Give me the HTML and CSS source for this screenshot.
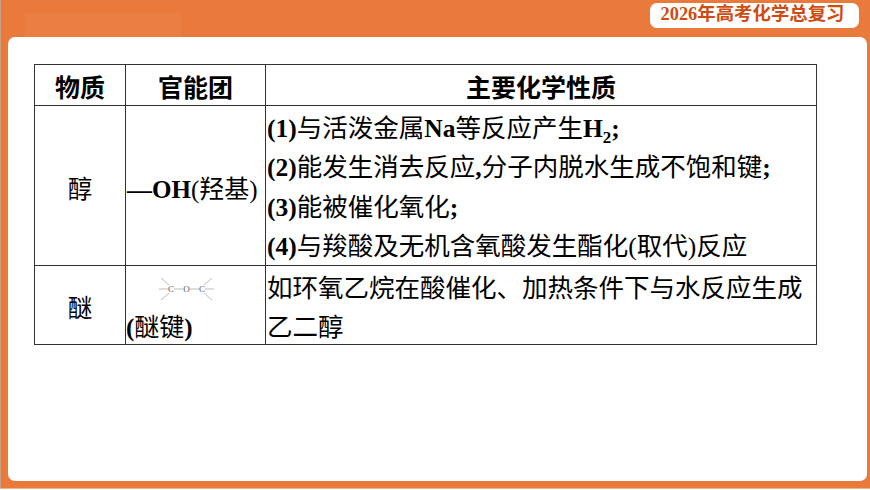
FILE: index.html
```html
<!DOCTYPE html>
<html lang="zh-CN">
<head>
<meta charset="utf-8">
<title>2026年高考化学总复习</title>
<link rel="stylesheet" href="styles.css">
</head>
<body>
<div class="slide">
  <header class="top">
    <div class="glow"></div>
    <div class="badge">2026年高考化学总复习</div>
  </header>
  <main class="panel">
    <table class="chem">
      <colgroup><col class="c1"><col class="c2"><col class="c3"></colgroup>
      <thead>
        <tr class="head"><th>物质</th><th>官能团</th><th>主要化学性质</th></tr>
      </thead>
      <tbody>
        <tr class="r1">
          <td class="mid">醇</td>
          <td class="mid fg"><b>—OH</b>(羟基)</td>
          <td class="props">
            <div class="props-text">
              <div><b>(1)</b>与活泼金属<b>Na</b>等反应产生<b>H<sub>2</sub></b><b>;</b></div>
              <div><b>(2)</b>能发生消去反应<b>,</b>分子内脱水生成不饱和键<b>;</b></div>
              <div><b>(3)</b>能被催化氧化<b>;</b></div>
              <div><b>(4)</b>与羧酸及无机含氧酸发生酯化(取代)反应</div>
            </div>
          </td>
        </tr>
        <tr class="r2">
          <td class="mid">醚</td>
          <td class="fg2">
            <svg class="coc" width="57" height="24" viewBox="0 0 57 24">
              <g stroke="#aaa" stroke-width="0.8" fill="none">
                <path d="M1 12H10M16 12H25M32 12H41M47 12H56"/>
                <path d="M3 1L11 8M3 23L11 16M54 1L46 8M54 23L46 16"/>
              </g>
              <g class="atoms">
                <text x="13" y="15">C</text>
                <text x="28.5" y="15">O</text>
                <text x="44" y="15">C</text>
              </g>
            </svg>
            <div class="fg2label"><b>(</b>醚键<b>)</b></div>
          </td>
          <td class="two"><div class="two-text">如环氧乙烷在酸催化、加热条件下与水反应生成乙二醇</div></td>
        </tr>
      </tbody>
    </table>
  </main>
</div>
</body>
</html>
```
FILE: styles.css
```css
* { box-sizing: border-box; }
html, body { margin: 0; padding: 0; }
body {
  width: 870px;
  height: 490px;
  overflow: hidden;
  background: #fff;
  font-family: "Liberation Serif", "Noto Sans CJK SC", serif;
  color: #000;
}
.slide {
  position: relative;
  width: 870px;
  height: 489px;
  background: #e97a3c;
  border-left: 1px solid #c9a184;
  border-bottom: 1px solid #f0b48e;
  display: flex;
  flex-direction: column;
  padding: 0 3px 7px 7px;
}
.top {
  height: 37px;
  flex: none;
  display: flex;
  justify-content: flex-end;
  align-items: flex-start;
  padding: 3px 8px 0 0;
}
.glow {
  position: absolute;
  left: 24px;
  top: 13px;
  width: 156px;
  height: 24px;
  background: #eb7e43;
}
.badge {
  width: 209px;
  height: 25px;
  background: #fff;
  border-radius: 7px;
  color: #cf4c11;
  font-size: 18.4px;
  font-weight: 700;
  line-height: 23px;
  text-align: center;
  white-space: nowrap;
  padding-right: 4px;
}
.panel {
  flex: 1;
  background: #fff;
  border-radius: 7px;
  padding: 27px 0 0 26px;
}
.chem {
  border-collapse: collapse;
  table-layout: fixed;
  width: 782px;
}
.c1 { width: 91px; }
.c2 { width: 140px; }
.c3 { width: 551px; }
.chem th, .chem td {
  border: 1px solid #333;
  padding: 0;
}
.head { height: 41px; }
.chem th {
  font-size: 25px;
  font-weight: 700;
  text-align: center;
  line-height: 32px;
  padding-top: 8px;
}
.r1 { height: 160px; }
.r2 { height: 79px; }
.chem .mid {
  text-align: center;
  vertical-align: middle;
  font-size: 24.5px;
  padding-top: 3px;
}
.chem .fg {
  font-size: 25px;
  white-space: nowrap;
  text-align: left;
  padding-left: 1px;
}
.fg2 {
  vertical-align: top;
  font-size: 25px;
}
.coc {
  display: block;
  margin: 11px 0 0 32px;
}
.atoms text {
  font-size: 9px;
  fill: #555;
  text-anchor: middle;
  font-family: "Liberation Serif", serif;
}
.fg2label {
  line-height: 30px;
  margin-top: 12px;
}
.chem .props {
  padding-left: 1px;
  vertical-align: top;
  white-space: nowrap;
}
.props-text {
  height: 158px;
  padding-top: 3px;
  font-size: 25.5px;
  line-height: 39.25px;
}
.props sub { font-size: 17px; line-height: 0; }
.chem .two {
  vertical-align: top;
  padding-left: 1px;
}
.two-text {
  height: 78px;
  padding-top: 3px;
  font-size: 25.5px;
  line-height: 39px;
}
```
